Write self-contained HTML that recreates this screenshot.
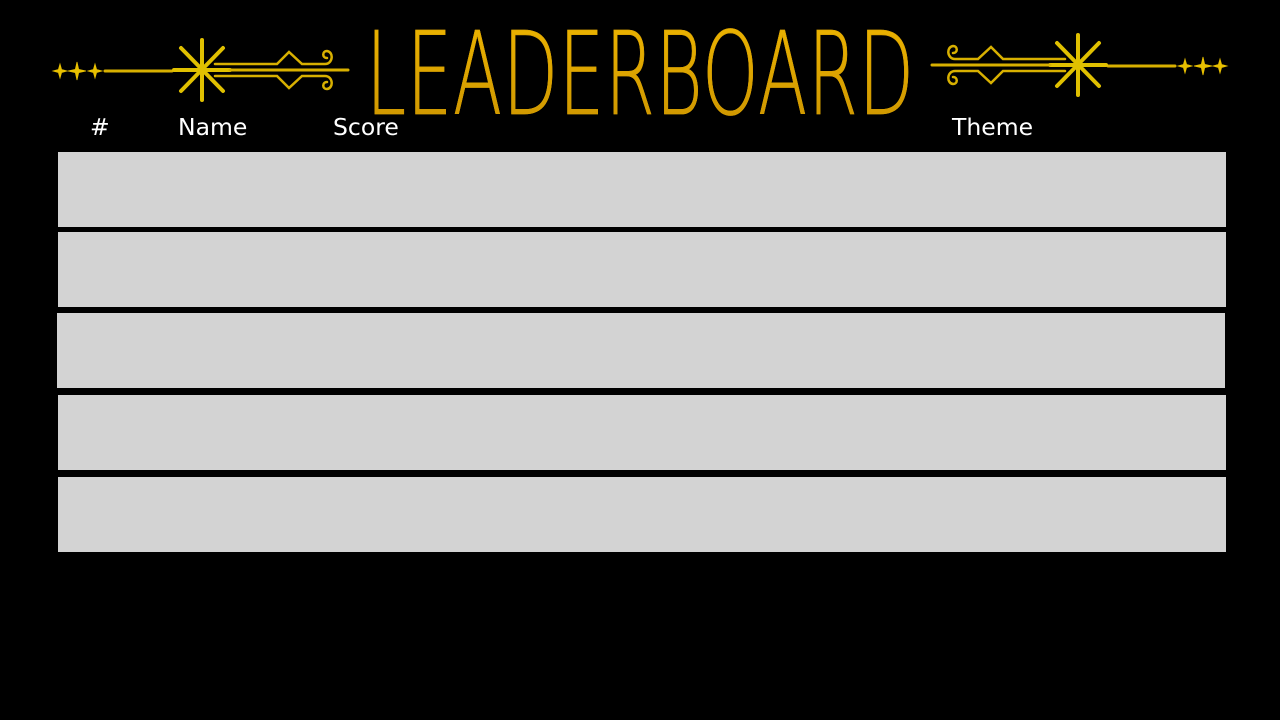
<!DOCTYPE html>
<html><head><meta charset="utf-8"><style>
html,body{margin:0;padding:0;background:#000;width:1280px;height:720px;overflow:hidden;font-family:"DejaVu Sans","Liberation Sans",sans-serif}
.row{position:absolute;height:75px;background:#d3d3d3}
.h{position:absolute;top:112px;color:#fff;font-size:23.5px;line-height:30px}
.title{position:absolute;left:366px;top:5px;font-family:"DejaVu Sans ExtraLight","DejaVu Sans",sans-serif;font-weight:200;font-size:115px;line-height:140px;transform-origin:0 0;transform:scaleX(0.626);white-space:nowrap;letter-spacing:1px;
background:linear-gradient(#f0b800,#c89000);-webkit-background-clip:text;color:transparent;-webkit-text-stroke:0.6px #d8a000}
</style></head><body>
<svg width="1280" height="150" style="position:absolute;left:0;top:0">
<defs>
<g id="orn" fill="none" stroke="#d8b000" stroke-linecap="round">
<path d="M60 64 L62 71 L60 78 L58 71Z M53 71 L60 69 L67 71 L60 73Z M77 62 L79 71 L77 80 L75 71Z M68 71 L77 69 L86 71 L77 73Z M95 64 L97 71 L95 78 L93 71Z M88 71 L95 69 L102 71 L95 73Z" fill="#e8c000" stroke="#e8c000" stroke-width="0.8"/>
<path d="M105 71 H172" stroke-width="3"/>
<g stroke-width="4" stroke="#e0c000">
<path d="M202 40 V100"/><path d="M181 48 L223 91"/><path d="M223 48 L181 91"/><path d="M174 70 H230"/>
</g>
<path d="M230 70 H348" stroke-width="3"/>
<path d="M215 64 H277 L289 52 L302 64 H325 C333 64 334 52 327 51 C322 51 322 58 327 58" stroke-width="2.5"/>
<path d="M215 76 H277 L289 88 L302 76 H325 C333 76 334 88 327 89 C322 89 322 82 327 82" stroke-width="2.5"/>
</g>
</defs>
<use href="#orn"/>
<use href="#orn" transform="translate(1280,-5) scale(-1,1)"/>
</svg>
<div class="title">LEADERBOARD</div>
<div class="h" style="left:90px">#</div>
<div class="h" style="left:178px">Name</div>
<div class="h" style="left:333px">Score</div>
<div class="h" style="left:952px">Theme</div>
<div class="row" style="left:58px;width:1168px;top:152px"></div>
<div class="row" style="left:58px;width:1168px;top:232px"></div>
<div class="row" style="left:57px;width:1168px;top:313px"></div>
<div class="row" style="left:58px;width:1168px;top:395px"></div>
<div class="row" style="left:58px;width:1168px;top:477px"></div>
</body></html>
